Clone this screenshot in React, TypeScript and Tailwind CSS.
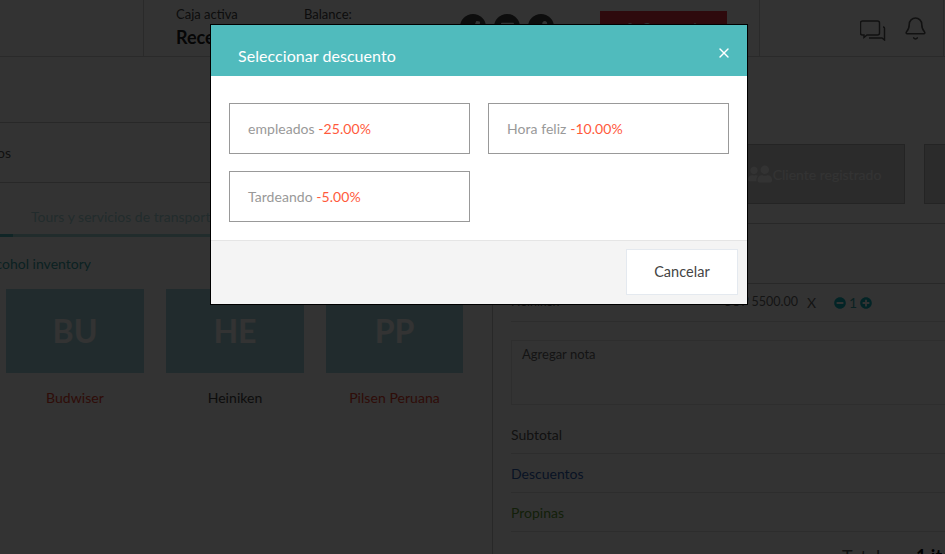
import { Bell, X } from 'lucide-react';
import { FaMinusCircle, FaPlusCircle, FaUser, FaUserFriends, FaPhone, FaEnvelope, FaShareAlt } from 'react-icons/fa';

const products = [
  { initials: 'BU', name: 'Budwiser', color: 'text-[#e8402c]' },
  { initials: 'HE', name: 'Heiniken', color: 'text-[#444444]' },
  { initials: 'PP', name: 'Pilsen Peruana', color: 'text-[#e8402c]' },
];

const discounts = [
  { name: 'empleados', value: '-25.00%' },
  { name: 'Hora feliz', value: '-10.00%' },
  { name: 'Tardeando', value: '-5.00%' },
];

const ChatIcon = () => (
  <svg width="26" height="21" viewBox="0 0 26 21" fill="none" stroke="currentColor" strokeWidth="1.5" className="mt-[5px] shrink-0">
    <path d="M2.5 1h15a2 2 0 0 1 2 2v10a2 2 0 0 1-2 2H7l-3 2.5V15H2.5a2 2 0 0 1-2-2V3a2 2 0 0 1 2-2z" />
    <path d="M23 7h.5a1.5 1.5 0 0 1 1 1.5V20l-2.5-2H9" />
  </svg>
);

const Header = () => (
  <div className="flex h-[57px] border-b border-[#d0d0d0]">
    <div className="w-[144px] border-r border-[#d0d0d0]" />
    <div className="flex w-[616px] border-r border-[#d0d0d0] pl-[32px]">
      <div className="w-[128px] pt-[5px]">
        <p className="text-[13px] leading-[18px] text-[#444444]">Caja activa</p>
        <p className="mt-[2px] text-[18px] leading-[24px] font-bold text-[#222222]">Recepción</p>
      </div>
      <div className="w-[156px] pt-[5px]">
        <p className="text-[13px] leading-[18px] text-[#444444]">Balance:</p>
      </div>
      <div className="flex gap-[8px] pt-[14px]">
        {[FaPhone, FaEnvelope, FaShareAlt].map((Icon, i) => (
          <div key={i} className="flex h-[26px] w-[26px] items-center justify-center rounded-full bg-[#404040] text-white">
            <Icon size={13} />
          </div>
        ))}
      </div>
      <div className="mt-[11px] ml-[46px] flex h-[36px] w-[127px] items-center justify-center gap-[6px] bg-[#e63240] text-[13px] text-white">
        <FaUser size={12} />
        Cerrar caja
      </div>
    </div>
    <div className="flex w-[184px] items-center gap-[17px] border-r border-[#d0d0d0] pl-[100px] text-[#555555]">
      <ChatIcon />
      <Bell size={25} strokeWidth={1.5} className="shrink-0" />
    </div>
  </div>
);

const LeftColumn = () => (
  <div className="w-[493px] shrink-0 border-r border-[#c8c8c8]">
    <div className="h-[66px] border-b border-[#c8c8c8]" />
    <div className="flex h-[60px] items-center border-b border-[#c8c8c8]">
      <div className="flex w-[11px] justify-end overflow-hidden text-[14px] whitespace-nowrap text-[#555555]">
        Productos
      </div>
    </div>
    <div className="h-[51px] pt-[24px] pl-[31px] text-[14px] leading-[20px] whitespace-nowrap text-[#a9d8da]">
      Tours y servicios de transporte
    </div>
    <div className="h-[3px] bg-[#a6d9da]">
      <div className="h-[3px] w-[13px] bg-[#50bbbd]" />
    </div>
    <div className="flex h-[52px] items-start pt-[17px]">
      <div className="flex w-[91px] justify-end overflow-hidden text-[14px] leading-[20px] whitespace-nowrap text-[#3aa6a8]">
        Alcohol inventory
      </div>
    </div>
    <div className="flex gap-[22px] pl-[6px]">
      {products.map((product) => (
        <div key={product.initials} className="w-[138px] last:w-[137px]">
          <div className="flex h-[84px] items-center justify-center bg-[#a5d8e0] text-[32px] font-bold text-white">
            {product.initials}
          </div>
          <div className={`flex h-[49px] items-center justify-center bg-[#fcfcfc] text-[14px] tracking-[0.05px] ${product.color}`}>
            {product.name}
          </div>
        </div>
      ))}
    </div>
  </div>
);

const SummaryRow = ({ label, color }: { label: string; color: string }) => (
  <div className={`flex h-[39px] items-center border-b border-[#e0e0e0] text-[14px] ${color}`}>{label}</div>
);

const RightColumn = () => (
  <div className="min-w-0 flex-1 overflow-hidden">
    <div className="flex gap-[19px] border-b border-[#c8c8c8] pt-[87px] pb-[19px] pl-[234px]">
      <div className="flex h-[60px] w-[178px] shrink-0 items-center justify-center gap-[1px] border border-[#b4b4b4] bg-[#d7d7d7] pr-[3px] text-[14px] text-white">
        <FaUserFriends size={24} className="-scale-x-100" />
        Cliente registrado
      </div>
      <div className="h-[60px] w-[178px] shrink-0 border border-[#b4b4b4] bg-[#d7d7d7]" />
    </div>
    <div className="h-[60px] border-b border-[#c8c8c8]" />
    <div className="pl-[18px]">
      <div className="flex h-[38px] items-center border-b border-[#e0e0e0] text-[12.5px] text-[#666666]">
        <span className="w-[212px]">Heiniken</span>
        <span className="w-[84px]">COP 5500.00</span>
        <span className="w-[27px] text-[14px]">X</span>
        <FaMinusCircle size={12} className="text-[#10b5bd]" />
        <span className="mx-[3px] text-[14px] text-[#3aa6a8]">1</span>
        <FaPlusCircle size={12} className="text-[#10b5bd]" />
      </div>
      <div className="mt-[18px] h-[65px] w-[500px] border border-[#e4e4e4] px-[10px] py-[4px] text-[13px] leading-[18px] text-[#666666]">
        Agregar nota
      </div>
      <div className="mt-[10px]">
        <SummaryRow label="Subtotal" color="text-[#555555]" />
        <SummaryRow label="Descuentos" color="text-[#2f5fb3]" />
        <SummaryRow label="Propinas" color="text-[#5f9e32]" />
      </div>
      <div className="flex pt-[11px] pl-[331px] text-[18px] whitespace-nowrap text-[#555555]">
        <span className="w-[74px] shrink-0">Total</span>
        <span className="font-bold text-black">1 item</span>
      </div>
    </div>
  </div>
);

const DiscountModal = () => (
  <div className="absolute top-[24px] left-[210px] w-[538px] border border-black bg-white tracking-[0.05px]">
    <div className="flex h-[51px] items-start justify-between bg-[#50bbbd] text-white">
      <p className="pt-[21px] pl-[27px] text-[16px] leading-[20px]">Seleccionar descuento</p>
      <X size={16} strokeWidth={2} className="mt-[20px] mr-[15px]" />
    </div>
    <div className="grid h-[165px] grid-cols-2 content-start gap-x-[18px] gap-y-[17px] border-b border-[#e5e5e5] px-[18px] pt-[27px]">
      {discounts.map((discount) => (
        <div
          key={discount.name}
          className="flex h-[51px] items-center border border-[#999999] pl-[18px] text-[14px] text-[#999999]"
        >
          {discount.name}&nbsp;<span className="text-[#ff5a3c]">{discount.value}</span>
        </div>
      ))}
    </div>
    <div className="flex h-[63px] justify-end bg-[#f4f4f4] pt-[8px] pr-[9px]">
      <div className="flex h-[46px] w-[112px] items-center justify-center border border-[#e4e9ef] bg-white text-[14.5px] text-[#444444]">
        Cancelar
      </div>
    </div>
  </div>
);

export default function App() {
  return (
    <div className="relative h-[554px] overflow-hidden bg-white font-['Lato',sans-serif]">
      <Header />
      <div className="flex h-[497px]">
        <LeftColumn />
        <RightColumn />
      </div>
      <div className="absolute inset-0 bg-black/80" />
      <DiscountModal />
    </div>
  );
}
